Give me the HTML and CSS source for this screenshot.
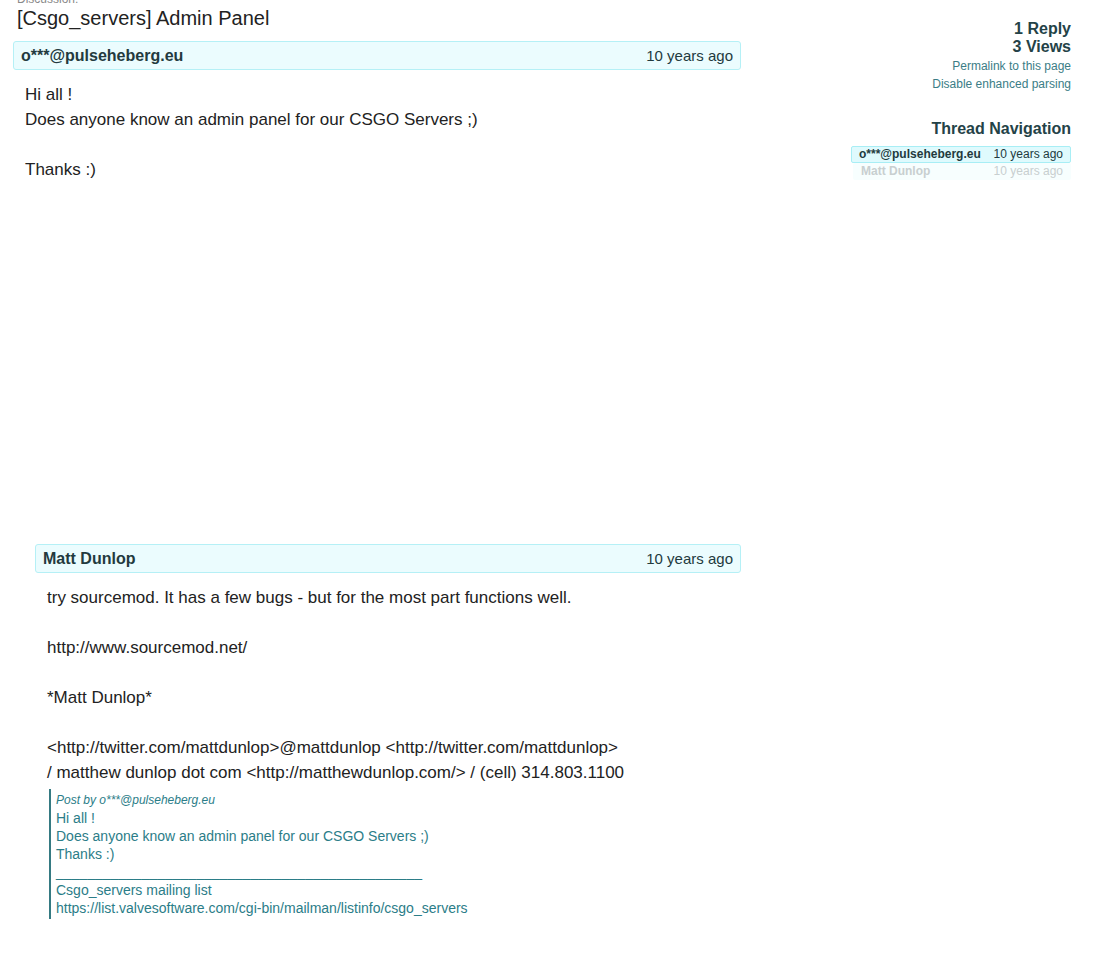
FILE: index.html
```html
<!DOCTYPE html>
<html>
<head>
<meta charset="utf-8">
<link rel="stylesheet" href="styles.css">
</head>
<body>
<div class="page">
  <main class="main">
    <div class="heading">
      <div class="label">Discussion:</div>
      <h1 class="title">[Csgo_servers] Admin Panel</h1>
    </div>
    <article class="post first">
      <div class="post-head">
        <span class="author">o***@pulseheberg.eu</span>
        <span class="date">10 years ago</span>
      </div>
      <div class="post-body">Hi all !<br>Does anyone know an admin panel for our CSGO Servers ;)<br><br>Thanks :)</div>
    </article>
    <article class="post reply">
      <div class="post-head">
        <span class="author">Matt Dunlop</span>
        <span class="date">10 years ago</span>
      </div>
      <div class="post-body">try sourcemod. It has a few bugs - but for the most part functions well.<br><br>http://www.sourcemod.net/<br><br>*Matt Dunlop*<br><br>&lt;http://twitter.com/mattdunlop&gt;@mattdunlop &lt;http://twitter.com/mattdunlop&gt;<br>/ matthew dunlop dot com &lt;http://matthewdunlop.com/&gt; / (cell) 314.803.1100
        <blockquote class="quote">
          <div class="quote-by">Post by o***@pulseheberg.eu</div>
          Hi all !<br>Does anyone know an admin panel for our CSGO Servers ;)<br>Thanks :)<br>_______________________________________________<br>Csgo_servers mailing list<br>https://list.valvesoftware.com/cgi-bin/mailman/listinfo/csgo_servers
        </blockquote>
      </div>
    </article>
  </main>
  <aside class="side">
    <div class="stats">1 Reply<br>3 Views</div>
    <div class="links"><a href="#">Permalink to this page</a><br><a href="#">Disable enhanced parsing</a></div>
    <h2 class="nav-title">Thread Navigation</h2>
    <div class="nav">
      <div class="nav-item active"><span class="nav-author">o***@pulseheberg.eu</span><span>10 years ago</span></div>
      <div class="nav-item faded"><span class="nav-author">Matt Dunlop</span><span>10 years ago</span></div>
    </div>
  </aside>
</div>
</body>
</html>
```
FILE: styles.css
```css
html, body {
  margin: 0;
  padding: 0;
  background: #fff;
}
body {
  font-family: "Liberation Sans", Arial, sans-serif;
  color: #1f2d30;
}
.page {
  display: flex;
  justify-content: space-between;
  padding: 0 42px 0 13px;
}
.main {
  width: 728px;
}
.heading {
  margin-top: -8px;
  padding-left: 4px;
}
.label {
  font-size: 12px;
  line-height: 14px;
  color: #8a8a8a;
}
.title {
  margin: 0;
  font-size: 20px;
  font-weight: normal;
  line-height: 24px;
  color: #222;
}
.post-head {
  display: flex;
  justify-content: space-between;
  align-items: center;
  height: 27px;
  padding: 0 7px;
  background: #ebfcfe;
  border: 1px solid #b5f0f6;
  border-radius: 3px;
  font-size: 15px;
  color: #233a3e;
}
.author {
  font-weight: bold;
  font-size: 16px;
}
.post.first {
  margin-top: 11px;
  min-height: 503px;
}
.post.reply {
  margin-left: 22px;
}
.post-body {
  padding: 12px 12px 0;
  font-size: 17px;
  line-height: 25px;
  color: #222;
}
.quote {
  margin: 4px 0 0 2px;
  padding: 2px 0 2px 5px;
  border-left: 2px solid #357a82;
  font-size: 14px;
  line-height: 18px;
  color: #2b7d88;
}
.quote-by {
  font-style: italic;
  font-size: 12px;
  line-height: 18px;
}
.side {
  width: 220px;
  text-align: right;
  padding-top: 20px;
}
.stats {
  font-size: 16px;
  font-weight: bold;
  line-height: 18px;
  color: #244247;
}
.links {
  font-size: 12px;
  line-height: 18px;
  margin-top: 1px;
}
.links a {
  color: #3b7d86;
  text-decoration: none;
}
.nav-title {
  margin: 26px 0 0;
  font-size: 16px;
  font-weight: bold;
  line-height: 20px;
  color: #244247;
}
.nav {
  margin-top: 7px;
}
.nav-item {
  display: flex;
  justify-content: space-between;
  font-size: 12px;
  line-height: 15px;
  padding: 0 7px;
  border: 1px solid transparent;
  border-radius: 2px;
  color: #223a3e;
}
.nav-author {
  font-weight: bold;
}
.nav-item.active {
  background: #dffafd;
  border-color: #a8eef5;
}
.nav-item.faded {
  background: #f7fefe;
  color: #c8cfd0;
  margin-left: 2px;
}
```
